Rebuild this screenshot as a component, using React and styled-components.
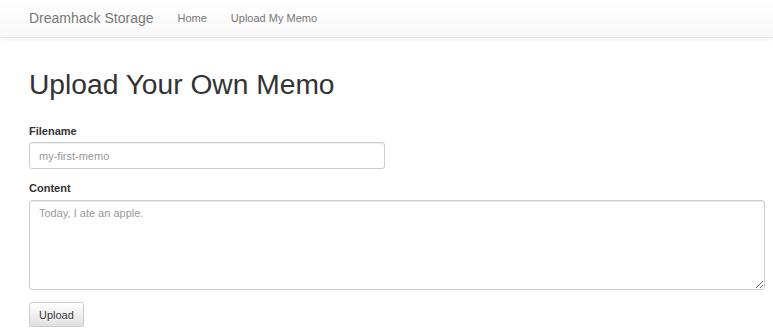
import React from 'react';
import styled, { createGlobalStyle } from 'styled-components';

const GlobalStyle = createGlobalStyle`
  html, body {
    margin: 0;
    padding: 0;
    background: #fff;
  }

  body {
    font-family: "Liberation Sans", Arial, Helvetica, sans-serif;
    font-size: 11px;
    line-height: 15px;
    color: #333;
  }

  * {
    box-sizing: border-box;
  }
`;

const Navbar = styled.nav`
  display: flex;
  align-items: center;
  height: 37.5px;
  padding: 0 0 0 17.75px;
  background-image: linear-gradient(to bottom, #fff 0, #f8f8f8 100%);
  border-bottom: 1px solid #e7e7e7;
  box-shadow: inset 0 1px 0 rgba(255, 255, 255, 0.15), 0 1px 5px rgba(0, 0, 0, 0.075);
`;

const Brand = styled.a`
  padding: 0 12px 0 11.25px;
  font-size: 14px;
  line-height: 20px;
  color: #777;
  text-decoration: none;
  text-shadow: 0 1px 0 rgba(255, 255, 255, 0.25);
`;

const NavLinks = styled.ul`
  display: flex;
  margin: 0;
  padding: 0;
  list-style: none;
`;

const NavLink = styled.a`
  display: block;
  padding: 0 12px;
  line-height: 15px;
  color: #777;
  text-decoration: none;
  text-shadow: 0 1px 0 rgba(255, 255, 255, 0.25);
`;

const Container = styled.main`
  padding: 0 8px 0 29px;
`;

const Title = styled.h1`
  margin: 31px 0 25px;
  font-size: 28.2px;
  font-weight: 500;
  line-height: 30px;
  color: #333;
`;

const FormGroup = styled.div`
  margin-bottom: 12px;
`;

const Label = styled.label`
  display: block;
  margin-bottom: 3.75px;
  font-weight: 700;
`;

const fieldStyles = `
  display: block;
  padding: 4.5px 9px;
  font-family: inherit;
  font-size: 11px;
  line-height: 15px;
  color: #555;
  background: #fff;
  border: 1px solid #ccc;
  border-radius: 3px;
  box-shadow: inset 0 1px 1px rgba(0, 0, 0, 0.075);
  outline: none;

  &::placeholder {
    color: #999;
  }
`;

const Input = styled.input`
  ${fieldStyles}
  width: 356px;
  height: 27px;
`;

const TextArea = styled.textarea`
  ${fieldStyles}
  width: 100%;
  height: 90px;
  resize: vertical;
`;

const Button = styled.button`
  display: inline-block;
  height: 25px;
  padding: 4.5px 9px;
  font-family: inherit;
  font-size: 11px;
  line-height: 15px;
  color: #333;
  background-image: linear-gradient(to bottom, #fff 0, #e0e0e0 100%);
  border: 1px solid #ccc;
  border-radius: 3px;
  text-shadow: 0 1px 0 #fff;
  box-shadow: inset 0 1px 0 rgba(255, 255, 255, 0.15), 0 1px 1px rgba(0, 0, 0, 0.075);
  cursor: pointer;
`;

export default function App() {
  return (
    <>
      <GlobalStyle />
      <Navbar>
        <Brand href="#">Dreamhack Storage</Brand>
        <NavLinks>
          <li>
            <NavLink href="#">Home</NavLink>
          </li>
          <li>
            <NavLink href="#">Upload My Memo</NavLink>
          </li>
        </NavLinks>
      </Navbar>
      <Container>
        <Title>Upload Your Own Memo</Title>
        <form onSubmit={(e) => e.preventDefault()}>
          <FormGroup>
            <Label htmlFor="filename">Filename</Label>
            <Input id="filename" type="text" placeholder="my-first-memo" />
          </FormGroup>
          <FormGroup>
            <Label htmlFor="content">Content</Label>
            <TextArea id="content" placeholder="Today, I ate an apple." />
          </FormGroup>
          <Button type="submit">Upload</Button>
        </form>
      </Container>
    </>
  );
}
